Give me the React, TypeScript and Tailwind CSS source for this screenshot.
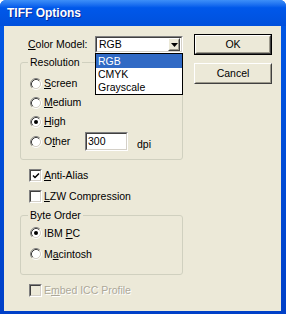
import React from "react";

const F = "font-['Liberation_Sans',Arial,sans-serif]";

function Sunken({ className = "", inner = "", children }: { className?: string; inner?: string; children?: React.ReactNode }) {
  return (
    <div className={`border border-t-[#808080] border-l-[#808080] border-r-white border-b-white ${className}`}>
      <div className={`h-full border border-t-[#404040] border-l-[#404040] border-r-[#d4d0c8] border-b-[#d4d0c8] ${inner}`}>{children}</div>
    </div>
  );
}

function Raised({ className = "", inner = "", children }: { className?: string; inner?: string; children?: React.ReactNode }) {
  return (
    <div className={`border border-t-white border-l-white border-r-[#404040] border-b-[#404040] bg-[#ece9d8] ${className}`}>
      <div className={`h-full border border-t-[#ece9d8] border-l-[#ece9d8] border-r-[#9d9a8c] border-b-[#9d9a8c] ${inner}`}>{children}</div>
    </div>
  );
}

function Radio({ checked = false }: { checked?: boolean }) {
  return (
    <svg width="12" height="12" viewBox="0 0 12 12" className="shrink-0">
      <circle cx="6" cy="6" r="4.2" fill="#ffffff" />
      <path d="M2.11 9.89 A5.5 5.5 0 0 1 9.89 2.11" stroke="#808080" fill="none" />
      <path d="M9.89 2.11 A5.5 5.5 0 0 1 2.11 9.89" stroke="#ffffff" fill="none" />
      <path d="M2.82 9.18 A4.5 4.5 0 0 1 9.18 2.82" stroke="#404040" fill="none" />
      <path d="M9.18 2.82 A4.5 4.5 0 0 1 2.82 9.18" stroke="#d4d0c8" fill="none" />
      {checked && <circle cx="6" cy="6" r="2" fill="#000000" />}
    </svg>
  );
}

function Check({ checked = false, disabled = false }: { checked?: boolean; disabled?: boolean }) {
  return (
    <Sunken className="w-[13px] h-[13px] shrink-0" inner={disabled ? "bg-[#ece9d8]" : "bg-white"}>
      {checked && (
        <svg width="11" height="11" viewBox="0 0 11 11">
          <path d="M2 4.5 L4 6.5 L8 2.5" stroke="#000" strokeWidth="1.5" fill="none" />
        </svg>
      )}
    </Sunken>
  );
}

function U({ children }: { children: React.ReactNode }) {
  return <span className="underline underline-offset-[1px]">{children}</span>;
}

function RadioRow({ h, checked, children }: { h: string; checked?: boolean; children: React.ReactNode }) {
  return (
    <div className={`flex items-center gap-[2px] ${h}`}>
      <Radio checked={checked} />
      <span>{children}</span>
    </div>
  );
}

export default function App() {
  return (
    <div className={`w-[286px] h-[314px] flex flex-col bg-gradient-to-b from-[#0058e6] to-[#0040c8] rounded-t-[6px] overflow-hidden ${F} text-[10.5px] leading-[13px] text-black`}>
      <div className="h-[26px] shrink-0 flex items-center pl-[7px] bg-gradient-to-b from-[#3d8ff8] via-[#0058ea] via-30% to-[#0050dc]">
        <span className="text-white font-bold text-[12px] [text-shadow:1px_1px_0_#0a2a9a]">TIFF Options</span>
      </div>
      <div className="flex-1 ml-[4px] mr-[5px] mb-[3px] bg-[#ece9d8] flex pt-[8px] pl-[16px]">
        <div className="w-[163px] flex flex-col">
          <div className="mt-[2px] h-[17px] flex items-center">
            <span className="ml-[8px] w-[67px]"><U>C</U>olor Model:</span>
            <div className="relative w-[88px] h-[17px]">
              <Sunken className="h-full" inner="bg-white flex items-center justify-between pl-[2px] pr-[1px]">
                <span>RGB</span>
                <Raised className="w-[12px] h-[13px]" inner="flex items-center justify-center">
                  <svg width="7" height="4" viewBox="0 0 7 4"><path d="M0 0 H7 L3.5 4 Z" fill="#000" /></svg>
                </Raised>
              </Sunken>
              <div className="absolute left-0 top-[17px] w-[88px] border border-black bg-white z-10">
                <div className="h-[14px] leading-[14px] pl-[2px] bg-[#316ac5] text-white">RGB</div>
                <div className="h-[13px] leading-[13px] pl-[2px]">CMYK</div>
                <div className="h-[13px] leading-[13px] pl-[2px]">Grayscale</div>
              </div>
            </div>
          </div>

          <fieldset className="mt-[3px] h-[104px] border border-[#d0d0bf] rounded-[3px] p-0 m-0 min-w-0">
            <legend className="ml-[7px] px-[2px] leading-[13px]">Resolution</legend>
            <div className="pl-[9px] pt-[5px] flex flex-col">
              <RadioRow h="h-[19px]"><U>S</U>creen</RadioRow>
              <RadioRow h="h-[19px]"><U>M</U>edium</RadioRow>
              <RadioRow h="h-[19px]" checked><U>H</U>igh</RadioRow>
              <div className="flex items-center gap-[2px] h-[21px]">
                <Radio />
                <span className="w-[39px]">O<U>t</U>her</span>
                <Sunken className="w-[43px] h-[19px]" inner="bg-white flex items-center pl-[1px]">
                  <span>300</span>
                </Sunken>
                <span className="ml-[7px] mt-[5px]">dpi</span>
              </div>
            </div>
          </fieldset>

          <div className="mt-[9px] h-[13px] flex items-center gap-[2px] pl-[9px]">
            <Check checked />
            <span><U>A</U>nti-Alias</span>
          </div>
          <div className="mt-[8px] h-[13px] flex items-center gap-[2px] pl-[9px]">
            <Check />
            <span><U>L</U>ZW Compression</span>
          </div>

          <fieldset className="mt-[6px] h-[66px] border border-[#d0d0bf] rounded-[3px] p-0 m-0 min-w-0">
            <legend className="ml-[7px] px-[2px] leading-[13px]">Byte Order</legend>
            <div className="pl-[9px] pt-[1px] flex flex-col gap-[1px]">
              <RadioRow h="h-[20px]" checked>IBM <U>P</U>C</RadioRow>
              <RadioRow h="h-[20px]">M<U>a</U>cintosh</RadioRow>
            </div>
          </fieldset>

          <div className="mt-[9px] h-[13px] flex items-center gap-[2px] pl-[9px]">
            <Check disabled />
            <span className="text-[#aca899] [text-shadow:1px_1px_0_#ffffff]">E<U>m</U>bed ICC Profile</span>
          </div>
        </div>

        <div className="ml-[11px] w-[78px] flex flex-col">
          <div className="h-[21px] border border-black">
            <Raised className="h-full" inner="flex items-center justify-center">OK</Raised>
          </div>
          <Raised className="mt-[8px] h-[21px]" inner="flex items-center justify-center">Cancel</Raised>
        </div>
      </div>
    </div>
  );
}
